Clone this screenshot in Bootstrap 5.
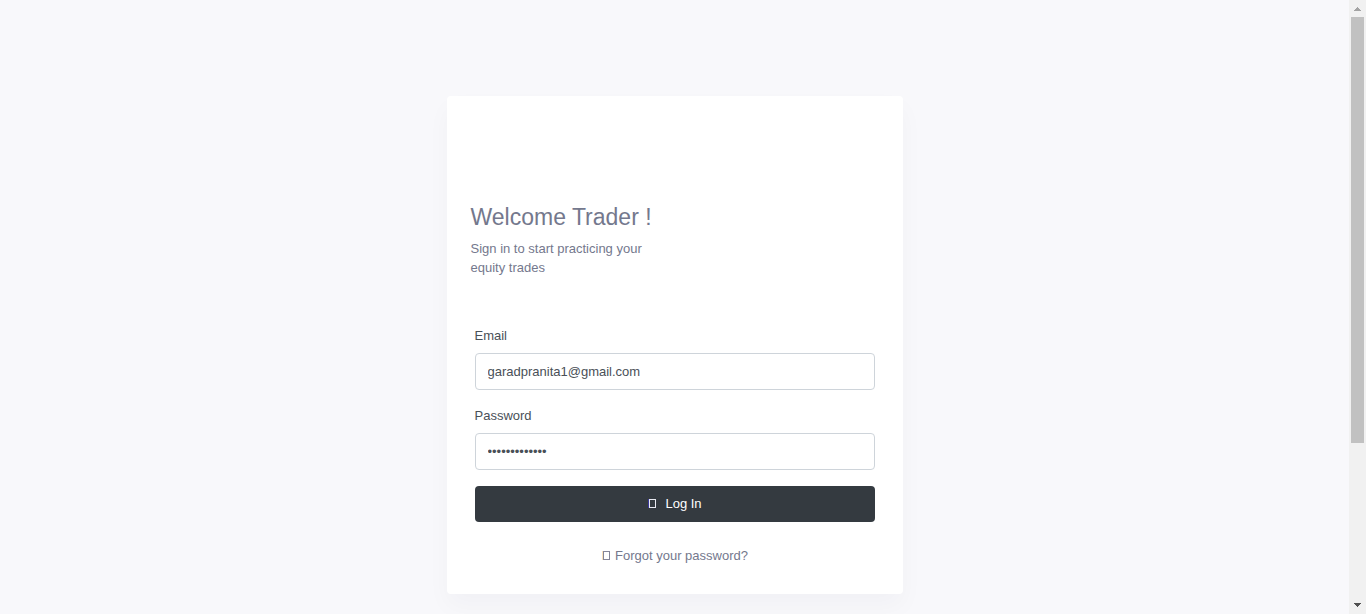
<!DOCTYPE html>
<html lang="en">
<head>
<meta charset="utf-8">
<meta name="viewport" content="width=device-width, initial-scale=1">
<title>Log In</title>
<link href="https://cdn.jsdelivr.net/npm/bootstrap@5.3.0/dist/css/bootstrap.min.css" rel="stylesheet">
<style>
  body { font: 400 13px/19px "Liberation Sans", Arial, sans-serif; color: #495057; background: #f8f8fb; }
  .auth-container { max-width: 1152px; }
  .auth-card { border: 0; border-radius: 4px; box-shadow: 0 12px 24px rgba(18, 38, 63, .03); }
  .auth-intro { padding: 107px 24px 0; color: #74788d; }
  .auth-intro h1 { font-size: 23px; line-height: 28px; font-weight: 400; }
  .auth-form { padding: 49px 28px 28px; }
  .auth-form .form-control { font-size: 13px; line-height: 19px; padding: 8px 12px; border-color: #ced4da; border-radius: 4px; color: #495057; }
  .auth-form .btn { font-size: 13px; line-height: 20px; padding: 8px 12px; border: 0; border-radius: 4px; background: #343a40; }
  .auth-link { color: #74788d; line-height: 20px; }
  .scroll-rail { width: 17px; background: #f1f1f1; }
  .scroll-arrow { height: 17px; }
  .scroll-thumb { flex: 426 0 0; margin: 0 2px; background: #c1c1c1; }
  .scroll-rest { flex: 154 0 0; }
</style>
</head>
<body class="d-flex vh-100 overflow-hidden">
<main class="flex-grow-1 overflow-hidden">
  <div class="container auth-container my-5 pt-5">
    <div class="row justify-content-center">
      <div class="col-md-8 col-lg-6 col-xl-5">
        <div class="card auth-card">
          <div class="auth-intro">
            <div class="row">
              <div class="col-12"><h1 class="mb-2">Welcome Trader !</h1></div>
              <div class="col-6"><p class="mb-0">Sign in to start practicing your equity trades</p></div>
            </div>
          </div>
          <form class="auth-form">
            <div class="mb-3">
              <label class="d-block mb-2" for="email">Email</label>
              <input class="form-control" type="email" id="email" value="garadpranita1@gmail.com">
            </div>
            <div class="mb-3">
              <label class="d-block mb-2" for="password">Password</label>
              <input class="form-control" type="password" id="password" value="practice12345">
            </div>
            <button class="btn btn-dark w-100 d-flex align-items-center justify-content-center gap-2" type="submit">
              <svg width="10" height="10" viewBox="-1 0 10 10" shape-rendering="crispEdges" aria-hidden="true"><path d="M1 0h7v9H1zM2 1v7h5V1z" fill="#e9eaf2" fill-rule="evenodd"/><path d="M0 0h1v9H0z" fill="#3c3a9c"/></svg>
              <span>Log In</span>
            </button>
            <div class="mt-4 text-center">
              <a class="auth-link d-inline-flex align-items-center gap-1 text-decoration-none" href="#">
                <svg width="10" height="10" viewBox="-1 0 10 10" shape-rendering="crispEdges" aria-hidden="true"><path d="M1 0h7v9H1zM2 1v7h5V1z" fill="#858699" fill-rule="evenodd"/><path d="M0 0h1v9H0z" fill="#fbe3bd"/></svg>
                <span>Forgot your password?</span>
              </a>
            </div>
          </form>
        </div>
      </div>
    </div>
  </div>
</main>
<div class="scroll-rail d-flex flex-column flex-shrink-0" aria-hidden="true">
  <div class="scroll-arrow"><svg class="d-block" width="17" height="17" shape-rendering="crispEdges"><path d="M8 7h1v1h1v1h1v1h1v1H5v-1h1V9h1V8h1z" fill="#a3a3a3"/></svg></div>
  <div class="scroll-thumb"></div>
  <div class="scroll-rest"></div>
  <div class="scroll-arrow"><svg class="d-block" width="17" height="17" shape-rendering="crispEdges"><path d="M5 6h7v1h-1v1h-1v1H9v1H8V9H7V8H6V7H5z" fill="#505050"/></svg></div>
</div>
<script src="https://cdn.jsdelivr.net/npm/bootstrap@5.3.0/dist/js/bootstrap.bundle.min.js"></script>
</body>
</html>
